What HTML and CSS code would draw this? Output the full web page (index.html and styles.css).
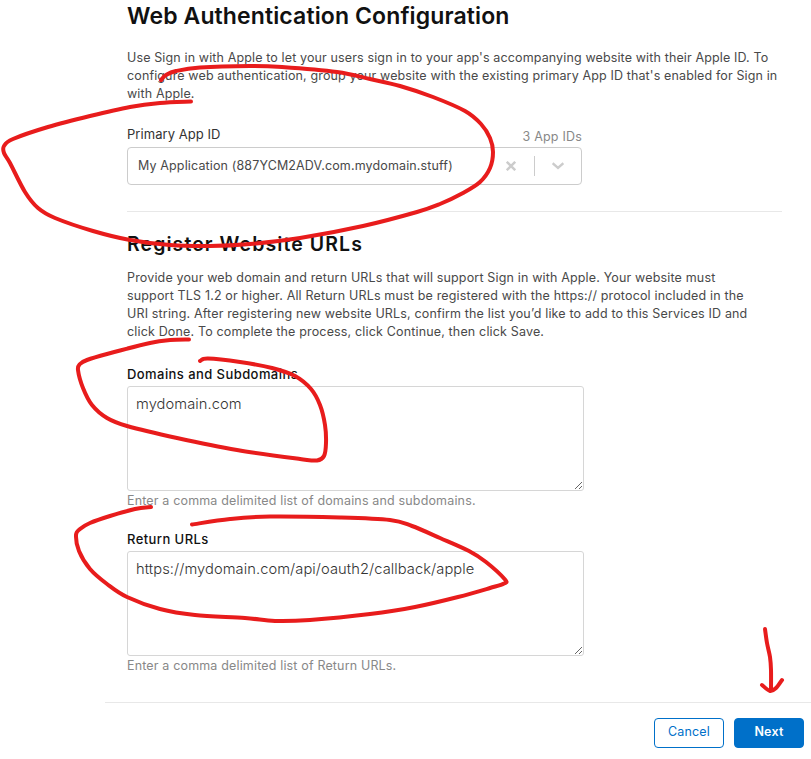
FILE: index.html
```html
<!DOCTYPE html>
<html lang="en">
<head>
<meta charset="utf-8">
<title>Web Authentication Configuration</title>
<link rel="stylesheet" href="styles.css">
</head>
<body>
<main class="content">
  <h1 class="title">Web Authentication Configuration</h1>
  <p class="text intro">Use Sign in with Apple to let your users sign in to your app's accompanying website with their Apple ID. To<br>configure web authentication, group your website with the existing primary App ID that's enabled for Sign in<br>with Apple.</p>
  <div class="select-head">
    <span class="label">Primary App ID</span>
    <span class="count">3 App IDs</span>
  </div>
  <div class="select">
    <span class="select-value">My Application (887YCM2ADV.com.mydomain.stuff)</span>
    <svg class="clear" viewBox="0 0 10 10"><path d="M.8.8l8.4 8.4M9.2.8L.8 9.2"/></svg>
    <span class="separator"></span>
    <svg class="chevron" viewBox="0 0 12 8"><path d="M.6 1.2L6 6l5.4-4.8"/></svg>
  </div>
  <hr class="rule">
  <h2 class="subtitle">Register Website URLs</h2>
  <p class="text register">Provide your web domain and return URLs that will support Sign in with Apple. Your website must<br>support TLS 1.2 or higher. All Return URLs must be registered with the https:// protocol included in the<br>URI string. After registering new website URLs, confirm the list you’d like to add to this Services ID and<br>click Done. To complete the process, click Continue, then click Save.</p>
  <section class="field">
    <label class="label strong" for="domains">Domains and Subdomains</label>
    <textarea class="area" id="domains">mydomain.com</textarea>
    <p class="hint">Enter a comma delimited list of domains and subdomains.</p>
  </section>
  <section class="field">
    <label class="label strong" for="urls">Return URLs</label>
    <textarea class="area" id="urls" spellcheck="false">https://mydomain.com/api/oauth2/callback/apple</textarea>
    <p class="hint">Enter a comma delimited list of Return URLs.</p>
  </section>
</main>
<footer class="footer">
  <button class="button">Cancel</button>
  <button class="button primary">Next</button>
</footer>
<svg class="ink" viewBox="0 0 811 759">
  <path data-points="161,80 166,75 176,71 200,67.5 250,66 282,67 337,72 370,79 400,86 433,97 465,111 481,124 490,138 493,152 490,168 480,182 463,193 440,204 417,212 363,226 300,238 250,244 210,246 170,245 130,240 93,231 55,218 38,208 25,192 10,163 4,153 4,146 13,139 48,127 90,116 130,107 160,103 191,101.5"/>
  <path data-points="200,361 208,358.5 240,362 272,368 295,376 311,389 320,405 325,425 326,443 324,456 317,460.5 300,459 237,450 177,438 127,426 107,418 92,405 83,388 78,370 80,364 87,360 107,354 150,343 170,340 189,339.5"/>
  <path data-points="192,524.5 230,519 270,516.5 340,517.5 390,520 412,526 440,538 469,551 486,562 505,579.5 504,583.5 490,588 458,597 415,607 370,614 310,620 275,621 245,618 195,615 160,609 127,597 107,584 90,569 79,551 76,535 80,529 90,523 110,516 135,509 151,507"/>
  <path data-points="765,629 767,643 770,657 771,670 771,690"/>
  <path data-points="762,685 770,691 776,688 782,680"/>
</svg>
<script src="ink.js"></script>
</body>
</html>
```
FILE: styles.css
```css
* { box-sizing: border-box; }
body {
  margin: 0;
  width: 811px;
  height: 759px;
  overflow: hidden;
  background: #fff;
  color: #494949;
  font-family: Inter, "Liberation Sans", sans-serif;
}
h1, h2, p { margin: 0; white-space: nowrap; }
.content { width: 655px; margin-left: 127px; }
.title {
  padding-top: 2px;
  font-size: 23px;
  line-height: 28px;
  font-weight: 600;
  letter-spacing: 0.12px;
  color: #111;
}
.text { font-size: 12.5px; line-height: 18px; letter-spacing: 0.13px; }
.intro { margin-top: 19px; }
.select-head {
  display: flex;
  justify-content: space-between;
  width: 455px;
  height: 20px;
  margin-top: 24px;
}
.label { font-size: 13px; line-height: 18px; letter-spacing: 0.05px; color: #333; }
.label.strong { display: block; font-weight: 500; letter-spacing: 0.43px; color: #111; }
.select-head .label { margin-top: -2px; }
.count { margin-top: 1px; font-size: 12.5px; line-height: 18px; letter-spacing: 0.2px; color: #888; }
.select {
  display: flex;
  align-items: center;
  width: 455px;
  height: 38px;
  margin-top: 0;
  padding: 0 17px 0 10px;
  border: 1px solid #ccc;
  border-radius: 4px;
}
.select-value { flex: 1; padding-bottom: 1px; font-size: 12.5px; letter-spacing: 0.14px; white-space: nowrap; }
.clear, .chevron { fill: none; stroke: #ccc; stroke-width: 2.4; }
.clear { width: 10px; height: 10px; }
.separator { width: 1px; height: 20px; margin: 0 17px 0 18px; background: #ccc; }
.chevron { width: 12px; height: 8px; }
.rule { height: 1px; margin: 26px 0 0; border: 0; background: #e8e8e8; }
.subtitle {
  margin-top: 20px;
  font-size: 19.5px;
  line-height: 24px;
  font-weight: 600;
  letter-spacing: 1.08px;
  color: #111;
}
.register { margin-top: 13px; letter-spacing: 0.16px; }
.field { margin-top: 24px; }
.field + .field { margin-top: 20px; }
.area {
  display: block;
  width: 457px;
  height: 105px;
  margin: 3px 0 0;
  padding: 8px;
  border: 1px solid #d6d6d6;
  border-radius: 3px;
  background: #fff;
  color: #333;
  font-family: inherit;
  font-size: 14.7px;
  font-weight: 300;
  line-height: 19px;
  letter-spacing: 0.07px;
  outline: 0;
}
.hint { margin-top: 1px; font-size: 12.5px; line-height: 18px; letter-spacing: 0.16px; color: #888; }
.footer {
  display: flex;
  justify-content: flex-end;
  gap: 10px;
  margin: 27px 0 0 105px;
  padding: 15px 7px 0 0;
  border-top: 1px solid #e8e8e8;
}
.button {
  width: 70px;
  height: 30px;
  padding: 0 0 4px;
  border: 1px solid #0070c9;
  border-radius: 4px;
  background: #fff;
  color: #0070c9;
  font-family: inherit;
  font-size: 12.5px;
  letter-spacing: 0.2px;
}
.primary { background: #0070c9; color: #fff; font-weight: 600; }
.ink {
  position: absolute;
  left: 0;
  top: 0;
  width: 811px;
  height: 759px;
  fill: none;
  stroke: #e81c1c;
  stroke-width: 4;
  stroke-linecap: round;
  stroke-linejoin: round;
  pointer-events: none;
}
```
FILE: ink.js
```js
// Draw each pen stroke as a smooth curve through its points.
document.querySelectorAll('.ink path').forEach(function (path) {
  var p = path.dataset.points.split(' ').map(function (s) { return s.split(',').map(Number); });
  var d = 'M' + p[0];
  for (var i = 0; i < p.length - 1; i++) {
    var a = p[i - 1] || p[i], b = p[i], c = p[i + 1], e = p[i + 2] || c;
    d += 'C' + [b[0] + (c[0] - a[0]) / 6, b[1] + (c[1] - a[1]) / 6,
      c[0] - (e[0] - b[0]) / 6, c[1] - (e[1] - b[1]) / 6, c[0], c[1]];
  }
  path.setAttribute('d', d);
});
```
